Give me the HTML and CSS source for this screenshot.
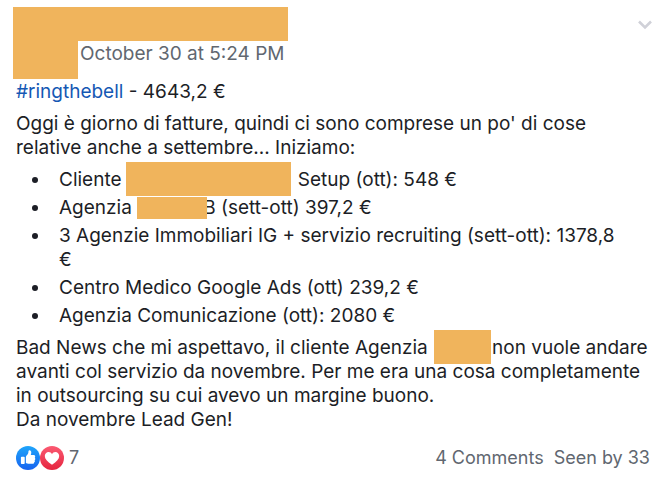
FILE: index.html
```
<!DOCTYPE html>
<html lang="it">

<head>
    <meta charset="UTF-8"/>
    <meta content="width=device-width, initial-scale=1.0" name="viewport"/>
    <title>#ringthebell</title>
    <link rel="stylesheet" href="styles.css">
</head>

<body>
    <article class="post">
        <!-- author and date -->
        <header class="header">
            <div class="avatar"></div>
            <div class="meta">
                <div class="author"></div>
                <a class="date" href="#">October 30 at 5:24 PM</a>
            </div>
            <button class="more" aria-label="More">
                <svg width="16" height="12" viewBox="0 0 16 12">
                    <path d="M2 2.5 8 8.5 14 2.5" fill="none" stroke="#d0d1d8" stroke-width="2.6"/>
                </svg>
            </button>
        </header>

        <div class="content">
            <p><a class="tag" href="#">#ringthebell</a> - 4643,2 €</p>
            <p>Oggi è giorno di fatture, quindi ci sono comprese un po' di cose relative anche a settembre... Iniziamo:</p>
            <ul class="list">
                <li>Cliente<span class="mask mask-client"></span> Setup (ott): 548 €</li>
                <li>Agenzia <span class="mask mask-agency"></span>B (sett-ott) 397,2 €</li>
                <li>3 Agenzie Immobiliari IG + servizio recruiting (sett-ott): 1378,8 €</li>
                <li>Centro Medico Google Ads (ott) 239,2 €</li>
                <li>Agenzia Comunicazione (ott): 2080 €</li>
            </ul>
            <p>Bad News che mi aspettavo, il cliente Agenzia <span class="mask mask-name"></span>non vuole andare avanti col servizio da novembre. Per me era una cosa completamente in outsourcing su cui avevo un margine buono.<br>Da novembre Lead Gen!</p>
        </div>

        <!-- reactions and counters -->
        <footer class="footer">
            <div class="reactions">
                <svg width="24" height="24" viewBox="0 0 24 24">
                    <defs>
                        <linearGradient id="blue" x1="0" y1="0" x2="0" y2="1">
                            <stop offset="0" stop-color="#1fa5fb"/>
                            <stop offset="1" stop-color="#1763ef"/>
                        </linearGradient>
                    </defs>
                    <circle cx="12" cy="12" r="12" fill="url(#blue)"/>
                    <path d="M5.7 10.7h2.2c.5 0 .8.3.8.8v5.7c0 .5-.3.8-.8.8H5.7c-.5 0-.8-.3-.8-.8v-5.7c0-.5.3-.8.8-.8z" fill="#fff"/>
                    <path d="M9.9 11.2c0-1 .5-1.5 1.2-2.3.9-1 1.3-1.8 1.3-3.2 0-.9.4-1.5 1.1-1.5 1.2 0 1.8 1 1.8 2.4 0 .9-.3 1.7-.5 2.5h2.8c1 0 1.6.7 1.6 1.5 0 .5-.2.9-.5 1.2.4.3.6.7.6 1.2 0 .6-.3 1-.7 1.3.2.3.3.6.3.9 0 .6-.4 1-.8 1.2 0 .9-.5 1.4-1.6 1.4h-3.3c-1.6 0-2.4-.4-3.3-.8z" fill="#fff"/>
                </svg>
                <svg width="24" height="24" viewBox="0 0 24 24">
                    <defs>
                        <linearGradient id="red" x1="0" y1="0" x2="0" y2="1">
                            <stop offset="0" stop-color="#fb5a72"/>
                            <stop offset="1" stop-color="#e5253f"/>
                        </linearGradient>
                    </defs>
                    <circle cx="12" cy="12" r="12" fill="url(#red)"/>
                    <path d="M12 18.8C7.3 15.6 4.8 13.2 4.8 10.1c0-2.3 1.7-4 3.8-4 1.6 0 2.8.8 3.4 2.1.6-1.3 1.8-2.1 3.4-2.1 2.1 0 3.8 1.7 3.8 4 0 3.1-2.5 5.5-7.2 8.7z" fill="#fff"/>
                </svg>
                <span class="count">7</span>
            </div>
            <div class="stats">
                <a href="#">4 Comments</a>
                <a href="#">Seen by 33</a>
            </div>
        </footer>
    </article>
</body>

</html>
```
FILE: styles.css
```
* {
    margin: 0;
    padding: 0;
    box-sizing: border-box;
}

body {
    background: #fff;
    color: #1c1e26;
    font: 19px/24px Inter, "Liberation Sans", sans-serif;
}

a {
    color: inherit;
    text-decoration: none;
}

.header {
    display: flex;
    padding: 7px 13px 0;
}

.avatar {
    width: 65px;
    height: 72px;
    background: #f0b45c;
}

.meta {
    flex: 1;
}

.author {
    width: 210px;
    height: 34px;
    background: #f0b45c;
}

.date {
    display: block;
    padding: 1px 0 0 2px;
    color: #616770;
}

.more {
    height: 12px;
    margin-top: 12px;
    border: none;
    background: none;
    cursor: pointer;
}

.more svg {
    display: block;
}

.content {
    padding: 1px 16px 0;
}

.content p {
    margin-bottom: 8px;
}

.tag {
    color: #1558b4;
}

.list {
    margin-bottom: 8px;
    list-style: none;
}

.list li {
    position: relative;
    margin-bottom: 4px;
    padding: 0 24px 0 43px;
}

.list li::before {
    content: "";
    position: absolute;
    top: 9px;
    left: 16px;
    width: 6px;
    height: 6px;
    border-radius: 50%;
    background: #1c1e26;
}

/* covered names */
.mask {
    display: inline-block;
    position: relative;
    height: 34px;
    margin: -6px 1px -4px;
    background: #f0b45c;
    vertical-align: top;
}

.mask-client {
    width: 165px;
    margin: -6px 2px -4px 4px;
}

.mask-agency {
    width: 70px;
    height: 22px;
    margin: 1px -4px 1px 0;
}

.mask-name {
    width: 57px;
}

.footer {
    display: flex;
    justify-content: space-between;
    padding: 6px 16px 12px;
    color: #616770;
    font-size: 18px;
}

.reactions {
    display: flex;
}

.count {
    margin-left: 5px;
}

.stats {
    display: flex;
    gap: 10px;
}
```
